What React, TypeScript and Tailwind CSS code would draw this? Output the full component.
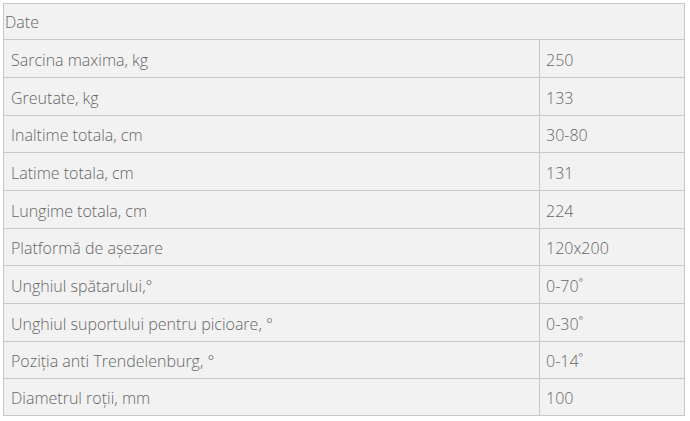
const rows = [
  { label: 'Sarcina maxima, kg', value: '250', h: 'h-[38px]' },
  { label: 'Greutate, kg', value: '133', h: 'h-[38px]' },
  { label: 'Inaltime totala, cm', value: '30-80', h: 'h-[37px]' },
  { label: 'Latime totala, cm', value: '131', h: 'h-[38px]' },
  { label: 'Lungime totala, cm', value: '224', h: 'h-[38px]' },
  { label: 'Platformă de așezare', value: '120x200', h: 'h-[37px]' },
  { label: 'Unghiul spătarului,°', value: '0-70˚', h: 'h-[38px]' },
  { label: 'Unghiul suportului pentru picioare, °', value: '0-30˚', h: 'h-[38px]' },
  { label: 'Poziția anti Trendelenburg, °', value: '0-14˚', h: 'h-[37px]' },
  { label: 'Diametrul roții, mm', value: '100', h: 'h-[37px]' },
];

const App = () => {
  return (
    <div className="min-h-screen bg-white pl-[3px] pt-[3px] font-['Open_Sans',sans-serif]">
      <table className="w-[682px] border-collapse bg-[#f2f2f2] text-[#666] font-light">
        <thead>
          <tr className="h-[36px]">
            <th colSpan={2} className="border border-[#c8c8c8] pl-[1px] text-left text-[16px] font-light">
              Date
            </th>
          </tr>
        </thead>
        <tbody>
          {rows.map((row) => (
            <tr key={row.label} className={row.h}>
              <td className="w-[536px] border border-[#c8c8c8] px-[7px] pt-[2px] text-[16px]">{row.label}</td>
              <td className="border border-[#c8c8c8] px-[6px] pt-[2px] text-[16px]">{row.value}</td>
            </tr>
          ))}
        </tbody>
      </table>
    </div>
  );
};

export default App;
